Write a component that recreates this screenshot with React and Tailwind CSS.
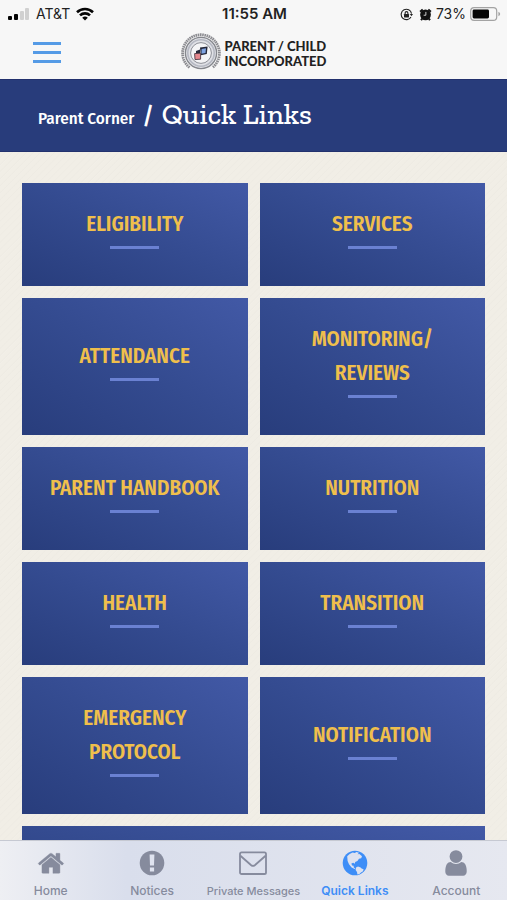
const links = [
  'Eligibility',
  'Services',
  'Attendance',
  'Monitoring/ Reviews',
  'Parent Handbook',
  'Nutrition',
  'Health',
  'Transition',
  'Emergency Protocol',
  'Notification',
];

function SignalIcon() {
  return (
    <svg viewBox="0 0 22 13" className="h-[13px] w-[22px]" aria-hidden="true">
      <rect x="0" y="8" width="4" height="4" rx="1" fill="#050505" />
      <rect x="6" y="6" width="4" height="6" rx="1" fill="#050505" />
      <rect x="12" y="3" width="4" height="9" rx="1" fill="#d0d0d0" />
      <rect x="17" y="0" width="4" height="12" rx="1" fill="#d0d0d0" />
    </svg>
  );
}

function WifiIcon() {
  return (
    <svg viewBox="0 0 18 14" className="h-[14px] w-[18px]" fill="none" stroke="#050505" strokeWidth="2.6" aria-hidden="true">
      <path d="M1 5.2a11.5 11.5 0 0 1 16 0" />
      <path d="M4 8.4a7.2 7.2 0 0 1 10 0" />
      <path d="M9 13.6 6.2 10.8a4 4 0 0 1 5.6 0z" fill="#050505" stroke="none" />
    </svg>
  );
}

function RotationLockIcon() {
  return (
    <svg viewBox="0 0 14 14" className="h-[13px] w-[13px]" fill="none" stroke="#222" strokeWidth="1.2" aria-hidden="true">
      <path d="M11.8 9.6A5.6 5.6 0 1 1 12.4 6" />
      <path d="M10.6 6.4h3.4L12.3 9z" fill="#222" stroke="none" />
      <rect x="4.3" y="6.4" width="5.4" height="3.8" rx=".5" fill="#222" stroke="none" />
      <path d="M5.5 6.6V5.4a1.5 1.5 0 0 1 3 0v1.2" />
    </svg>
  );
}

function AlarmIcon() {
  return (
    <svg viewBox="0 0 14 14" className="h-[13px] w-[13px]" aria-hidden="true">
      <circle cx="7" cy="7.4" r="5.8" fill="#111" />
      <path d="M1.2 4 4 1.6M12.8 4 10 1.6M3.4 11.4 2.2 13M10.6 11.4 11.8 13" stroke="#111" strokeWidth="2.2" />
      <path d="M7.4 4.2v3.6H5" fill="none" stroke="#d8d8d8" strokeWidth="1" />
    </svg>
  );
}

function BatteryIcon() {
  return (
    <svg viewBox="0 0 31 14" className="h-[14px] w-[31px]" aria-hidden="true">
      <rect x=".7" y=".7" width="26" height="12.6" rx="3.4" fill="none" stroke="#a3a3a3" strokeWidth="1.2" />
      <rect x="2.6" y="2.6" width="16.4" height="8.8" rx="1.4" fill="#050505" />
      <path d="M28.4 4.8v4.4q1.8-.8 1.8-2.2t-1.8-2.2z" fill="#a3a3a3" />
    </svg>
  );
}

function Seal() {
  return (
    <svg viewBox="0 0 40 38" className="h-[38px] w-10" fill="none" aria-hidden="true">
      <path d="M8.5 34.5a18.4 18.4 0 1 1 23 0" stroke="#8b8b90" strokeWidth="2.8" strokeDasharray="1.6 .6" />
      <circle cx="20" cy="20" r="15.6" fill="#e0e1e6" stroke="#85878d" strokeWidth="1.4" />
      <circle cx="20" cy="20" r="13.2" stroke="#b6b9c3" strokeWidth="1.6" />
      <circle cx="20" cy="20" r="10.4" fill="#f4f4f6" stroke="#8e9098" strokeWidth="1" />
      <path d="m19 14.6 7.6-1-.8 7.4-6 1.2z" fill="#25283a" />
      <path d="m20.6 16 4.4-.7-.5 4.6-4 .8z" fill="#7fa3e2" />
      <path d="m15 18 4-1.6v4h-4z" fill="#25283a" />
      <path d="m13.6 20.6 6-.4v6l-5.6.4z" fill="#e5878d" stroke="#3d2a35" strokeWidth=".8" />
    </svg>
  );
}

function HomeIcon() {
  return (
    <svg viewBox="0 0 1792 1792" className="h-7 w-7" fill="currentColor" aria-hidden="true">
      <path
        transform="translate(60 20)"
        stroke="currentColor"
        strokeWidth="24"
        d="M1408 992v480q0 26-19 45t-45 19h-384v-384h-256v384h-384q-26 0-45-19t-19-45v-480q0-1 .5-3t.5-3l575-474 575 474q1 2 1 6zm223-69l-62 74q-8 9-21 11h-3q-13 0-21-7l-692-577-692 577q-12 8-24 7-13-2-21-11l-62-74q-8-10-7-23.5t11-21.5l719-599q32-26 76-26t76 26l244 204v-195q0-14 9-23t23-9h192q14 0 23 9t9 23v408l219 182q10 8 11 21.5t-7 23.5z"
      />
    </svg>
  );
}

function NoticeIcon() {
  return (
    <svg viewBox="0 0 28 28" className="h-7 w-7" aria-hidden="true">
      <circle cx="14" cy="14" r="12.3" fill="currentColor" />
      <path d="M11.6 5.6h4.8l-.4 11h-4zM11.9 18.6h4.2v3.8h-4.2z" fill="#dfe3ef" />
    </svg>
  );
}

function MailIcon() {
  return (
    <svg viewBox="0 0 28 28" className="h-7 w-7" fill="none" stroke="currentColor" strokeWidth="1.8" aria-hidden="true">
      <rect x="1" y="3.4" width="26" height="21.6" rx="1.6" />
      <path d="m1.4 6.8 10.8 9.4q1.8 1.4 3.6 0l10.8-9.4" />
    </svg>
  );
}

function GlobeIcon() {
  return (
    <svg viewBox="0 0 28 28" className="h-7 w-7" aria-hidden="true">
      <circle cx="14" cy="14" r="12.3" fill="currentColor" />
      <path
        d="M6.2 7.2Q8.4 4.4 11.6 3.4l2.2.5 1.6-.9 2.6.8-1.4 1.4 1.8-.2 2.6 2.2-.8 2-2.2.6-1.6 2.2-2.2 1-.4 1.8-1.6-1-1.8.8.6 2 1.6.2.2 1.8 1.4.8-.6.6-3-1.6L8 15.2 6.6 12z"
        fill="#dde2f0"
      />
      <path d="m15 18.4 2-.8 2.6.8 1 1.2 2 .6-.6 2-2 1.4-1.6 1.4-2 .6-.4-2.6-1.4-2z" fill="#dde2f0" />
    </svg>
  );
}

function UserIcon() {
  return (
    <svg viewBox="0 0 1792 1792" className="h-[30px] w-[30px]" fill="currentColor" aria-hidden="true">
      <path d="M1536 1399q0 109-62.5 187t-150.5 78h-854q-88 0-150.5-78t-62.5-187q0-85 8.5-160.5t31.5-152 58.5-131 94-89 134.5-34.5q131 128 313 128t313-128q76 0 134.5 34.5t94 89 58.5 131 31.5 152 8.5 160.5zm-256-887q0 159-112.5 271.5t-271.5 112.5-271.5-112.5-112.5-271.5 112.5-271.5 271.5-112.5 271.5 112.5 112.5 271.5z" />
    </svg>
  );
}

const tabs = [
  { label: 'Home', icon: <HomeIcon />, style: 'text-xs font-medium text-[#868b9d]' },
  { label: 'Notices', icon: <NoticeIcon />, style: 'text-xs font-medium text-[#868b9d]' },
  { label: 'Private Messages', icon: <MailIcon />, style: 'text-[11px] font-medium text-[#868b9d]' },
  { label: 'Quick Links', icon: <GlobeIcon />, style: 'text-xs font-semibold text-[#3e8ef7]' },
  { label: 'Account', icon: <UserIcon />, style: 'text-xs font-medium text-[#868b9d]' },
];

function StatusBar() {
  return (
    <div className="grid grid-cols-3 items-center h-7 pl-2 pr-[6px] font-['Inter',sans-serif] text-sm text-[#222]">
      <div className="flex items-center gap-[6px]">
        <SignalIcon />
        <span>AT&amp;T</span>
        <WifiIcon />
      </div>
      <span className="text-center text-[15px] font-semibold">11:55 AM</span>
      <div className="flex items-center justify-end gap-1">
        <div className="flex items-center gap-[6px]">
          <RotationLockIcon />
          <AlarmIcon />
        </div>
        <span>73%</span>
        <BatteryIcon />
      </div>
    </div>
  );
}

function LinkTile({ label }) {
  return (
    <a
      href="#"
      className="flex flex-col items-center justify-center gap-[5px] px-6 pt-6 pb-[37px] bg-linear-to-tr from-[#283d7c] via-[#344b90] to-[#4259a6]"
    >
      <span className="text-center text-[21px] leading-[34px] font-semibold uppercase text-[#efbf4c] font-['Fira_Sans_Condensed','Roboto_Condensed','Open_Sans',sans-serif]">
        {label}
      </span>
      <span className="h-[3px] w-[49px] bg-[#6a81d2]" />
    </a>
  );
}

export default function App() {
  return (
    <div className="relative flex flex-col h-screen overflow-hidden bg-[#f0ede4]">
      <header className="shrink-0 bg-[#f7f7f7]">
        <StatusBar />
        <div className="grid grid-cols-[1fr_auto_1fr] items-center h-[51px] px-[33px] pb-[3px]">
          <button type="button" aria-label="Menu" className="flex flex-col gap-[6px] w-7">
            <span className="h-[3px] bg-[#559be6]" />
            <span className="h-[3px] bg-[#559be6]" />
            <span className="h-[3px] bg-[#559be6]" />
          </button>
          <a href="#" className="flex items-center gap-1 text-[#222]">
            <Seal />
            <span className="flex flex-col pt-1 font-['Lato',sans-serif] text-[13px] leading-[15px] font-black">
              <span>PARENT / CHILD</span>
              <span>INCORPORATED</span>
            </span>
          </a>
        </div>
      </header>

      <div className="shrink-0 flex items-baseline gap-2 h-[73px] px-[38px] pt-[14px] bg-[#283c7b] border-y border-[#22316d] text-white">
        <a href="#" className="text-[17px] font-medium font-['Fira_Sans_Condensed','Roboto_Condensed','Open_Sans',sans-serif]">
          Parent Corner
        </a>
        <span className="text-2xl font-medium font-['Fira_Sans_Condensed','Open_Sans',sans-serif]">/</span>
        <h1 className="text-[29px] leading-10 font-medium font-['Zilla_Slab','DejaVu_Serif',serif]">Quick Links</h1>
      </div>

      <main className="flex-1 overflow-y-auto [scrollbar-width:none] px-[22px] pt-[31px] pb-20 bg-[repeating-linear-gradient(135deg,#f1eee6_0px,#f1eee6_3px,#eeebe3_4px,#f2efe8_5px)]">
        <div className="grid grid-cols-2 gap-3">
          {links.map((label) => (
            <LinkTile key={label} label={label} />
          ))}
          <div className="col-span-2 h-[103px] bg-linear-to-tr from-[#283d7c] via-[#344b90] to-[#4259a6]" />
        </div>
      </main>

      <nav className="absolute inset-x-0 bottom-0 grid grid-cols-5 h-[60px] border-t border-[#c6c9d2] bg-linear-to-r from-[#eeeff3] via-[#d9deec] via-25% to-[#e6e8f0] font-['Inter',sans-serif]">
        {tabs.map((tab) => (
          <a
            key={tab.label}
            href="#"
            className={`flex flex-col items-center whitespace-nowrap ${tab.style}`}
          >
            <span className="flex items-center justify-center h-[42px] pt-[2px]">{tab.icon}</span>
            <span className="leading-4">{tab.label}</span>
          </a>
        ))}
      </nav>
    </div>
  );
}
